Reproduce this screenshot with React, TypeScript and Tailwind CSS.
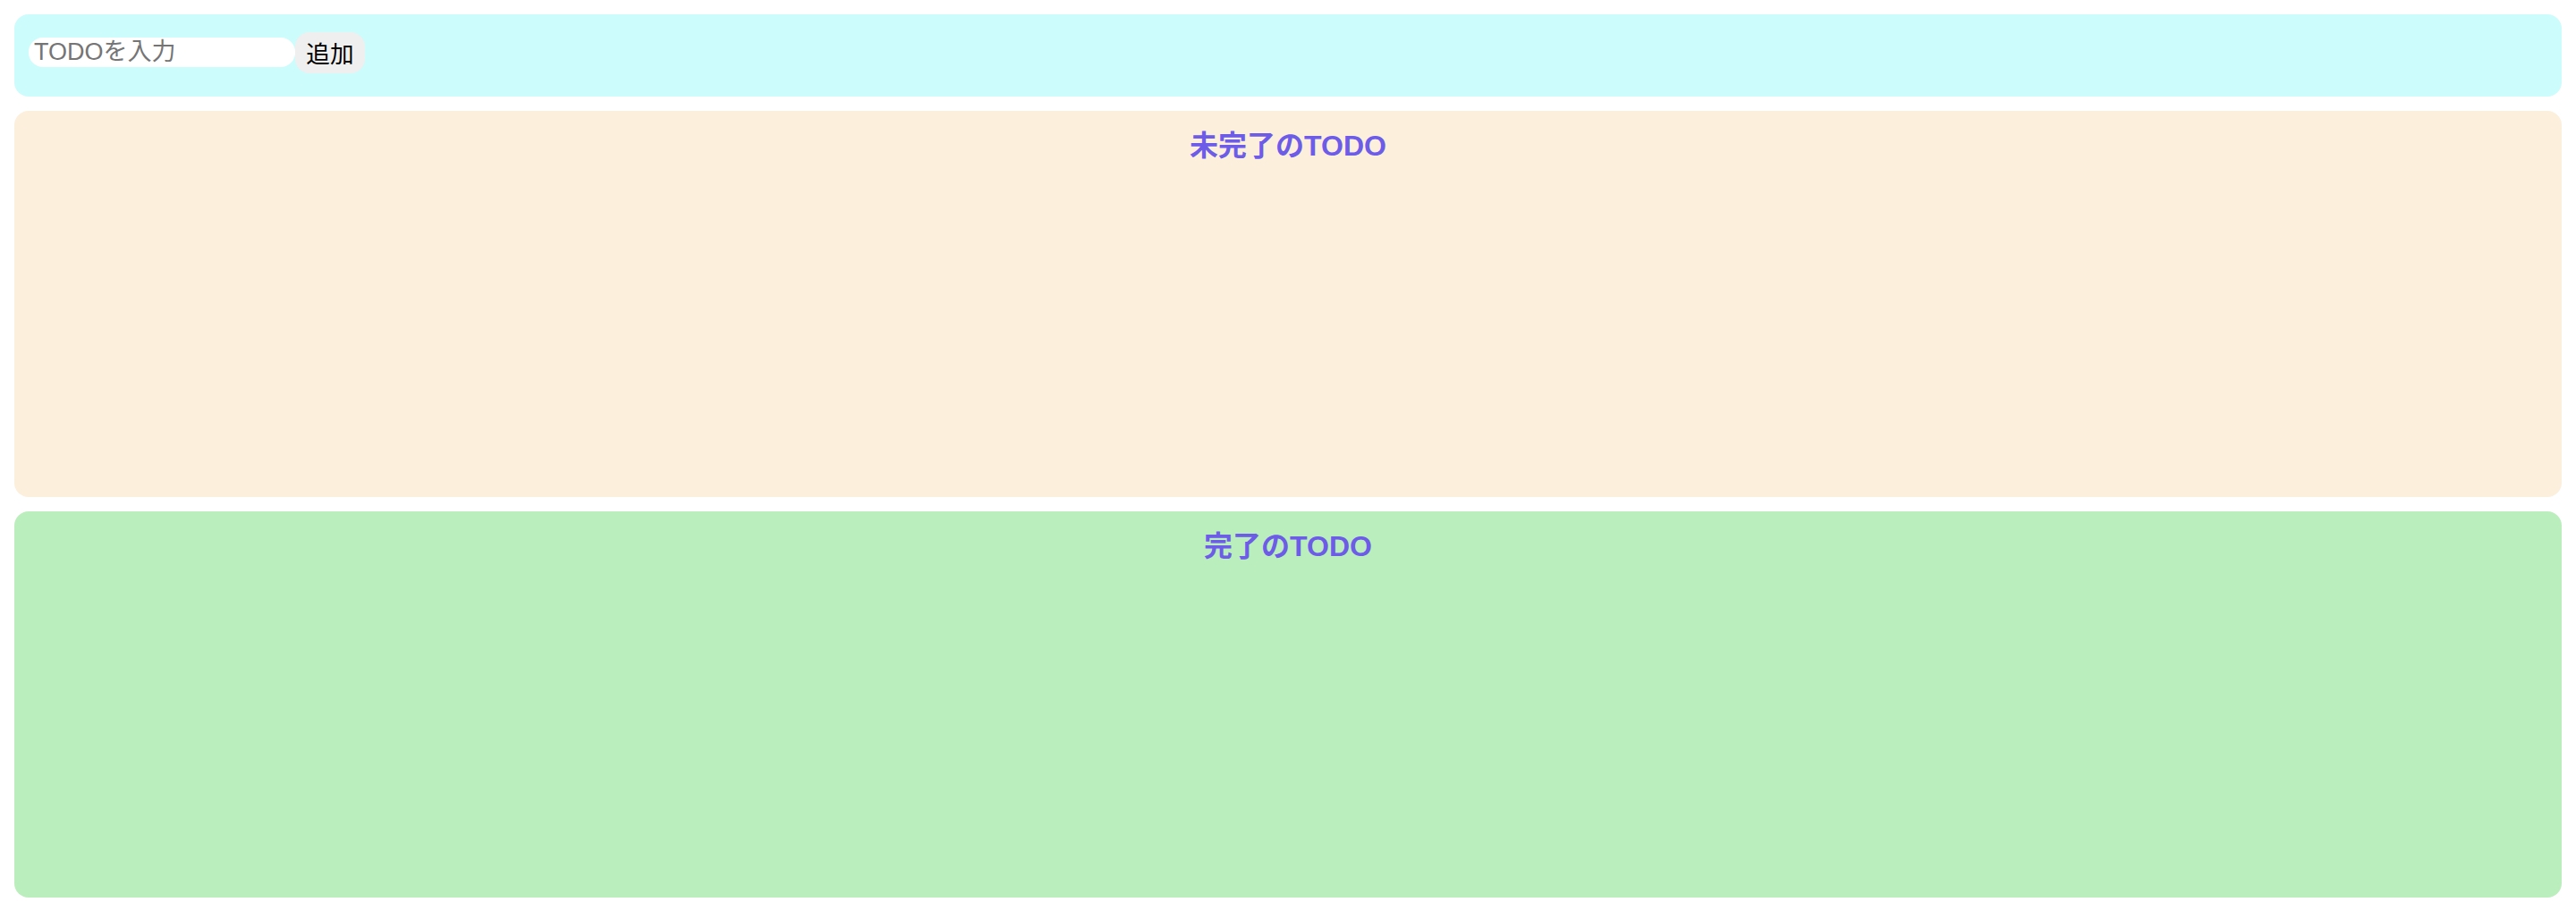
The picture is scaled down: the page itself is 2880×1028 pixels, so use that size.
import { useState } from "react";

type Section = { title: string; bg: string; items: string[] };

export default function App() {
  const [text, setText] = useState("");
  const [incomplete, setIncomplete] = useState<string[]>([]);
  const [complete] = useState<string[]>([]);

  const onAdd = () => {
    if (!text) return;
    setIncomplete([...incomplete, text]);
    setText("");
  };

  const sections: Section[] = [
    { title: "未完了のTODO", bg: "bg-[#fcefdc]", items: incomplete },
    { title: "完了のTODO", bg: "bg-[#bbeebd]", items: complete },
  ];

  return (
    <div className="min-h-[1028px] bg-white p-4 font-['Liberation_Sans','Noto_Sans_CJK_JP',sans-serif]">
      <div className="flex h-[92px] items-start rounded-2xl bg-[#ccfcfc] px-4 pt-4">
        <div className="mt-[10px] flex h-[33px] w-[298px] items-center rounded-2xl bg-white px-[6px]">
          <input
            value={text}
            onChange={(e) => setText(e.target.value)}
            placeholder="TODOを入力"
            className="w-full border-0 bg-transparent p-0 text-black outline-none [font-size:27px] [line-height:33px] placeholder:text-[#757575] placeholder:[font-size:27px]"
          />
        </div>
        <button
          onClick={onAdd}
          className="mt-1 h-[46px] w-[78px] rounded-2xl bg-[#efefef] font-['Noto_Sans_CJK_JP',sans-serif] text-[26.67px] leading-none text-black"
        >
          追加
        </button>
      </div>

      {sections.map((s) => (
        <div key={s.title} className={`mt-4 min-h-[432px] rounded-2xl p-4 ${s.bg}`}>
          <p className="m-0 text-center text-[32px] font-bold leading-[46px] text-[#6c5ce7]">
            {s.title}
          </p>
          <ul>
            {s.items.map((t, i) => (
              <li key={i} className="text-[26px]">
                {t}
              </li>
            ))}
          </ul>
        </div>
      ))}
    </div>
  );
}
